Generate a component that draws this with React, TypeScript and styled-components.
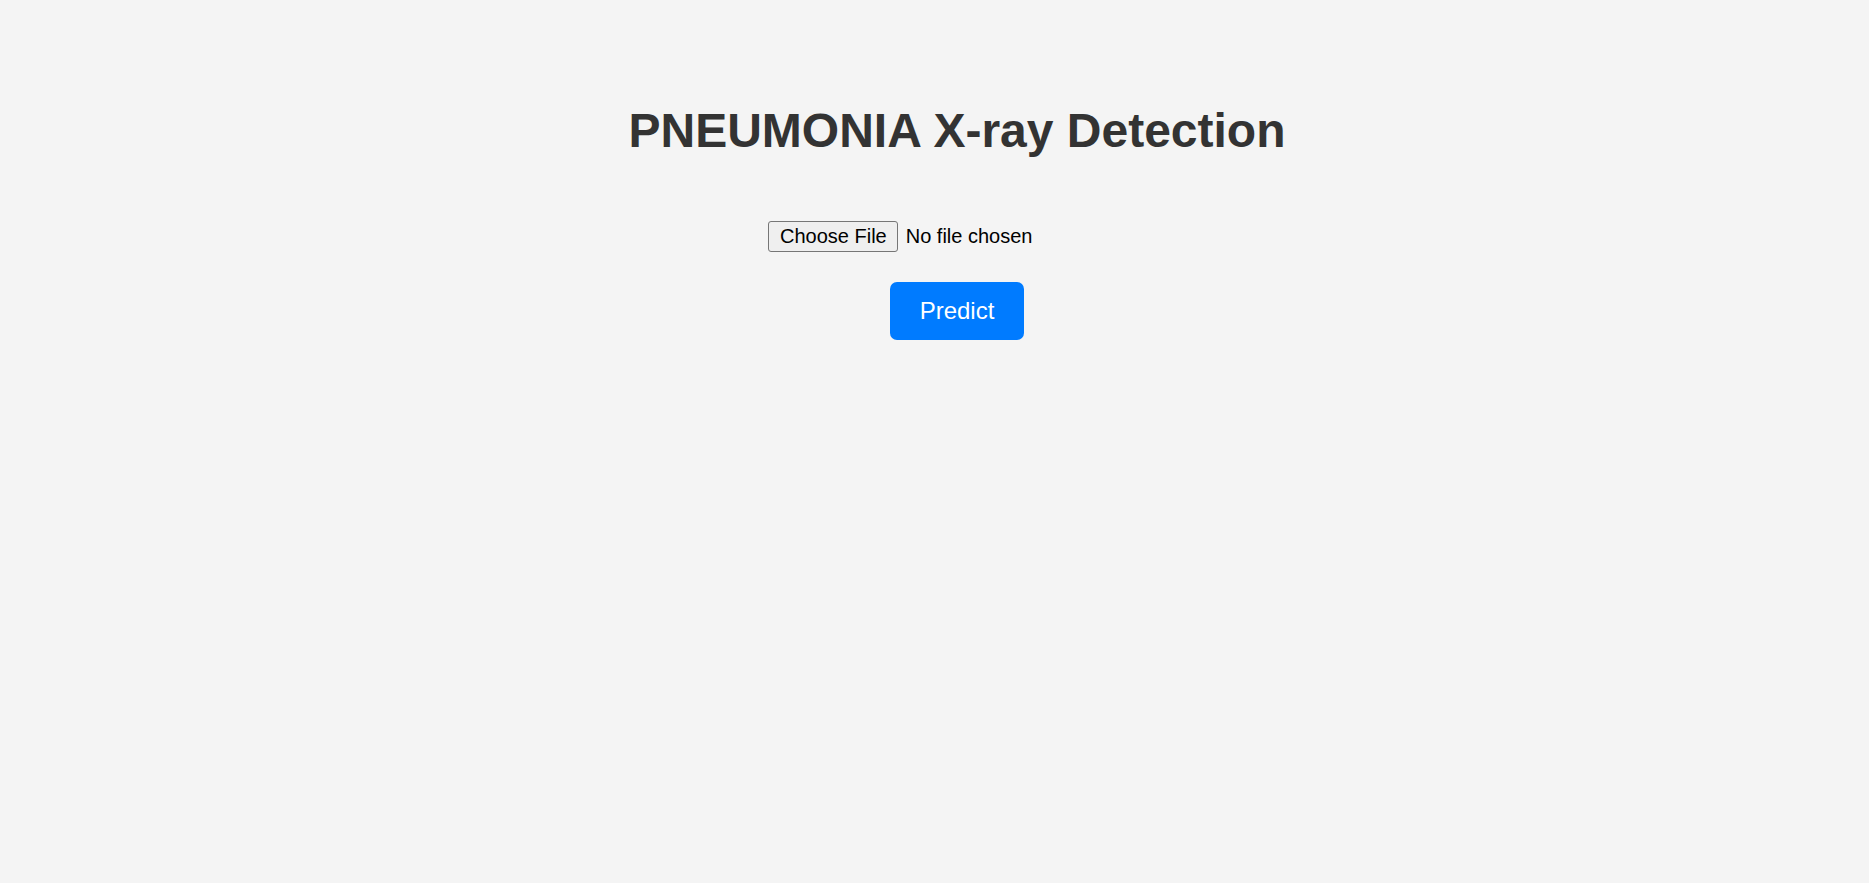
import React from 'react';
import styled, { createGlobalStyle } from 'styled-components';

const GlobalStyle = createGlobalStyle`
    html, body {
        margin: 0;
        padding: 0;
        background-color: #f4f4f4;
        font-family: 'Liberation Sans', Arial, sans-serif;
    }
`;

// Whole page, content centred a little right of the middle
const Page = styled.main`
    min-height: 883px;
    box-sizing: border-box;
    display: flex;
    flex-direction: column;
    align-items: center;
    padding: 103px 0 0 45px;
`;

const Title = styled.h1`
    margin: 0;
    font-size: 48px;
    font-weight: 700;
    line-height: normal;
    color: #333;
`;

const UploadForm = styled.form`
    margin-top: 63px;
    display: flex;
    flex-direction: column;
    align-items: center;
    gap: 30px;
`;

const FileInput = styled.input`
    width: 378px;
    margin: 0;
    font-family: 'Liberation Sans', Arial, sans-serif;
    font-size: 20px;
    color: #000;

    &::file-selector-button {
        font-family: inherit;
        font-size: 20px;
        color: #000;
        background: #efefef;
        border: 1px solid #767676;
        border-radius: 3px;
        padding: 3px 10px 3px 11px;
        margin-right: 8px;
        cursor: pointer;
    }
`;

const PredictButton = styled.button`
    font-family: 'Liberation Sans', Arial, sans-serif;
    font-size: 24px;
    line-height: 28px;
    color: #fff;
    background-color: #007bff;
    border: none;
    border-radius: 7px;
    padding: 15px 30px;
    cursor: pointer;
`;

const App = () => {
    return (
        <>
            <GlobalStyle />
            <Page>
                <Title>PNEUMONIA X-ray Detection</Title>
                <UploadForm onSubmit={(e) => e.preventDefault()}>
                    <FileInput type="file" accept="image/*" />
                    <PredictButton type="submit">Predict</PredictButton>
                </UploadForm>
            </Page>
        </>
    );
};

export default App;
